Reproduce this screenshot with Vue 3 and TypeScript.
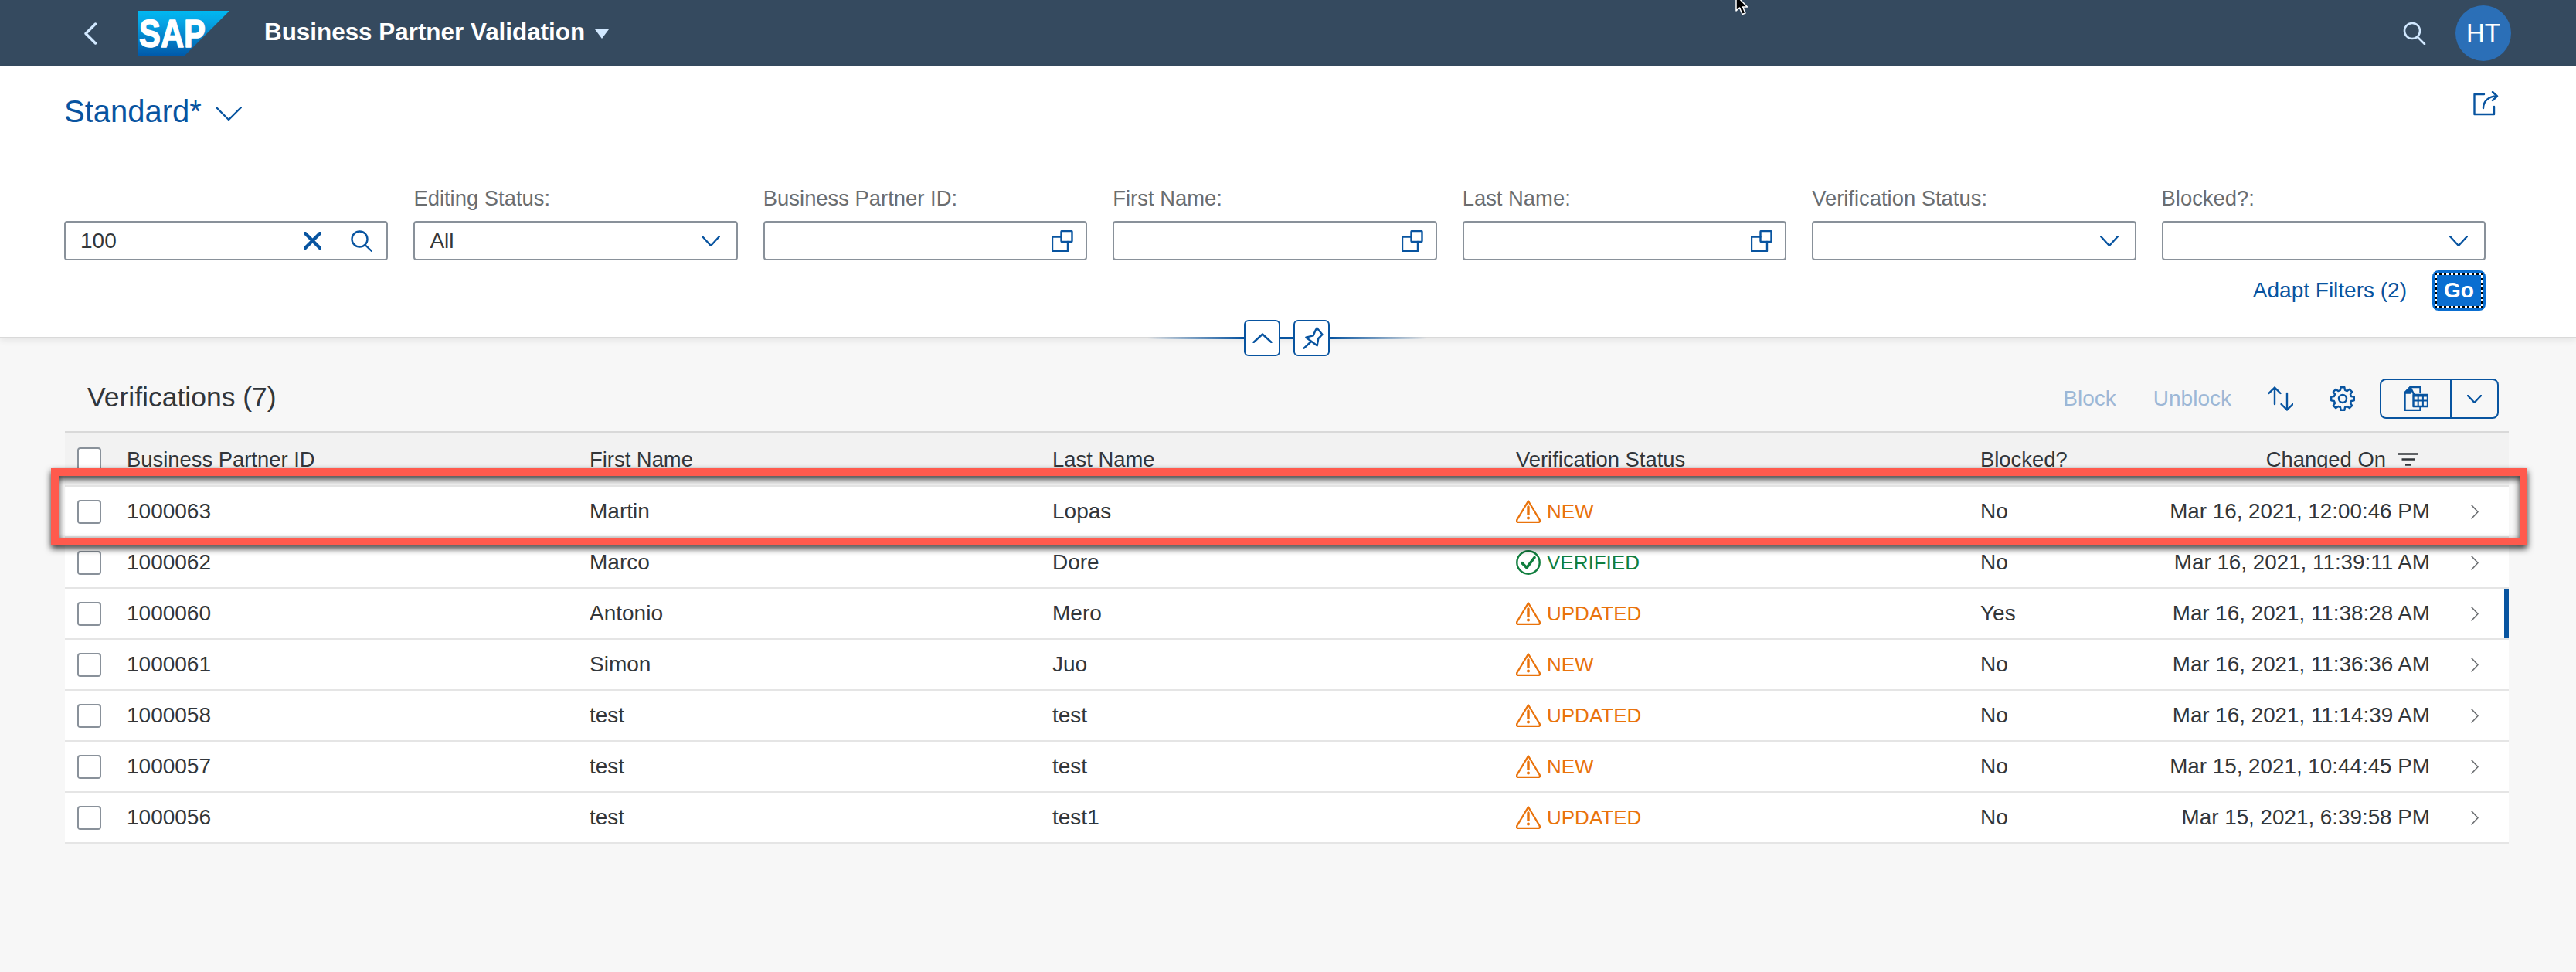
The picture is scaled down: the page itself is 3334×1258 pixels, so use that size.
<template>
  <div class="page">
    <header class="shell">
      <svg class="back" width="17" height="29" viewBox="0 0 17 29"><path d="M14.5 2 2 14.5 14.5 27" /></svg>
      <svg class="logo" width="119" height="59" viewBox="0 0 119 59">
        <defs>
          <linearGradient id="sapBlue" x1="0" y1="0" x2="0" y2="1">
            <stop offset="0" stop-color="#00b8f1" />
            <stop offset="0.25" stop-color="#06a5e5" />
            <stop offset="1" stop-color="#0058a9" />
          </linearGradient>
        </defs>
        <polygon points="0,0 119,0 60,59 0,59" fill="url(#sapBlue)" />
        <text x="2" y="47" textLength="86" lengthAdjust="spacingAndGlyphs" class="logo-text">SAP</text>
      </svg>
      <span class="app-title">Business Partner Validation</span>
      <span class="title-caret"></span>
      <svg class="shell-search" width="30" height="30" viewBox="0 0 30 30"><circle cx="12" cy="12" r="10" /><path d="M19 20 28 29" /></svg>
      <div class="avatar">HT</div>
    </header>

    <section class="filter-bar">
      <div class="variant-row">
        <div class="variant">
          <span>Standard*</span>
          <svg width="34" height="18" viewBox="0 0 34 18"><path d="M1 1 17 17 33 1" /></svg>
        </div>
        <svg class="share" width="33" height="32" viewBox="0 0 33 32"><path d="M14 4H1.500V30H27V20" /><path d="M13 22C13 13 20 6.500 30 6.500" /><path d="M25 1 31 6.500 25 12" /></svg>
      </div>

      <div class="filters">
        <div v-for="f in filters" :key="f.label" class="filter">
          <label>{{ f.label }}</label>
          <div class="input">
            <span class="value">{{ f.value }}</span>
            <template v-if="f.kind === 'search'">
              <svg class="clear" width="23" height="23" viewBox="0 0 23 23"><path d="M2 2 21 21M21 2 2 21" /></svg>
              <svg class="search" width="28" height="28" viewBox="0 0 28 28"><circle cx="11.500" cy="11.500" r="10" /><path d="M18.500 19 27 27" /></svg>
            </template>
            <svg v-else-if="f.kind === 'help'" class="help" width="28" height="28" viewBox="0 0 28 28"><rect x="12.500" y="1" width="14" height="14" rx="1" /><path d="M12.500 8.500H1V27H21V15" /></svg>
            <svg v-else class="caret" width="24" height="14" viewBox="0 0 24 14"><path d="M1 1 12 13 23 1" /></svg>
          </div>
        </div>
      </div>

      <div class="actions">
        <a class="adapt">Adapt Filters (2)</a>
        <button class="go">Go</button>
      </div>

      <div class="expander">
        <button class="mini"><svg width="26" height="13" viewBox="0 0 26 13"><path d="M1.500 12 13 1.500 24.500 12" /></svg></button>
        <button class="mini">
          <svg width="43" height="43" viewBox="0 0 43 43"><path d="M14.300 20.700 23.700 18.300 26.700 11.300 28.500 8.500 35.500 17 33 19.500 30.300 22 28.700 31.300Z" /><path d="M11.700 34.700 21 26" /></svg>
        </button>
      </div>
    </section>

    <main class="content">
      <div class="toolbar">
        <h2>Verifications (7)</h2>
        <div class="tools">
          <span class="off">Block</span>
          <span class="off">Unblock</span>
          <svg width="32" height="32" viewBox="0 0 32 32"><path d="M8 23V1.500M.500 9 8 1.500 15.500 9M24 9V30.500M16.500 23 24 30.500 31.500 23" /></svg>
          <svg class="gear" width="32" height="32" viewBox="0 0 32 32"><path :d="gear" /><circle cx="16" cy="16" r="5" /></svg>
          <div class="menu-btn">
            <div class="menu-main">
              <svg width="32" height="32" viewBox="0 0 32 32">
                <path d="M8.500 1H21.500V8M21.500 27V31H1.500V8L8.500 1Z" />
                <path d="M1.500 8.500 8.500 8.500V1Z" class="fold" />
                <rect x="12.500" y="11" width="18.500" height="15" class="sheet" />
                <path d="M12.500 12.500H31M18.700 11V26M24.900 11V26M12.500 18.500H31" class="sheet-lines" />
              </svg>
            </div>
            <div class="menu-arrow"><svg width="19" height="11" viewBox="0 0 19 11"><path d="M1 1 9.500 10 18 1" /></svg></div>
          </div>
        </div>
      </div>

      <div class="row head">
        <div class="cell check"><span class="box"></span></div>
        <div class="cell">Business Partner ID</div>
        <div class="cell">First Name</div>
        <div class="cell">Last Name</div>
        <div class="cell">Verification Status</div>
        <div class="cell">Blocked?</div>
        <div class="cell changed">
          <span>Changed On</span>
          <svg width="26" height="18" viewBox="0 0 26 18"><path d="M0 1.500H26M4.500 8.500H21.500M9 15.500H17" /></svg>
        </div>
        <div class="cell"></div>
      </div>

      <div v-for="r in rows" :key="r.id" class="row" :class="{ marked: r.marked }">
        <div class="cell check"><span class="box"></span></div>
        <div class="cell">{{ r.id }}</div>
        <div class="cell">{{ r.first }}</div>
        <div class="cell">{{ r.last }}</div>
        <div class="cell status" :class="r.status === 'VERIFIED' ? 'ok' : 'warn'">
          <svg v-if="r.status === 'VERIFIED'" width="32" height="32" viewBox="0 0 32 32">
            <circle cx="16" cy="16" r="14.700" />
            <path class="tick" d="M8 16.700 14 22.700 24 9.500" />
          </svg>
          <svg v-else width="32" height="30" viewBox="0 0 32 30">
            <path d="M16 1.500 30.500 25.500Q32 29 28.500 29H3.500Q0 29 1.500 25.500Z" />
            <path class="mark" d="M16 9V18.500" />
            <circle class="dot" cx="16" cy="23.500" r="2" />
          </svg>
          <span>{{ r.status }}</span>
        </div>
        <div class="cell">{{ r.blocked }}</div>
        <div class="cell date">{{ r.date }}</div>
        <div class="cell nav"><svg width="10" height="19" viewBox="0 0 10 19"><path d="M1 1 9 9.500 1 18" /></svg></div>
      </div>
    </main>

    <div class="callout"></div>
    <svg class="pointer" width="24" height="24" viewBox="0 0 24 24"><path d="M2 -6V14L6.500 10 10 18.500 14 17 10.500 9H16.500Z" /></svg>
  </div>
</template>

<script setup lang="ts">
interface Filter {
  label: string
  value: string
  kind: 'search' | 'select' | 'help'
}

interface Row {
  id: string
  first: string
  last: string
  status: string
  blocked: string
  date: string
  marked?: boolean
}

const filters: Filter[] = [
  { label: '', value: '100', kind: 'search' },
  { label: 'Editing Status:', value: 'All', kind: 'select' },
  { label: 'Business Partner ID:', value: '', kind: 'help' },
  { label: 'First Name:', value: '', kind: 'help' },
  { label: 'Last Name:', value: '', kind: 'help' },
  { label: 'Verification Status:', value: '', kind: 'select' },
  { label: 'Blocked?:', value: '', kind: 'select' },
]

const rows: Row[] = [
  { id: '1000063', first: 'Martin', last: 'Lopas', status: 'NEW', blocked: 'No', date: 'Mar 16, 2021, 12:00:46 PM' },
  { id: '1000062', first: 'Marco', last: 'Dore', status: 'VERIFIED', blocked: 'No', date: 'Mar 16, 2021, 11:39:11 AM' },
  { id: '1000060', first: 'Antonio', last: 'Mero', status: 'UPDATED', blocked: 'Yes', date: 'Mar 16, 2021, 11:38:28 AM', marked: true },
  { id: '1000061', first: 'Simon', last: 'Juo', status: 'NEW', blocked: 'No', date: 'Mar 16, 2021, 11:36:36 AM' },
  { id: '1000058', first: 'test', last: 'test', status: 'UPDATED', blocked: 'No', date: 'Mar 16, 2021, 11:14:39 AM' },
  { id: '1000057', first: 'test', last: 'test', status: 'NEW', blocked: 'No', date: 'Mar 15, 2021, 10:44:45 PM' },
  { id: '1000056', first: 'test', last: 'test1', status: 'UPDATED', blocked: 'No', date: 'Mar 15, 2021, 6:39:58 PM' },
]

// 8 tooth gear outline
function gearPath(): string {
  const pts: string[] = []
  for (let i = 0; i < 8; i++) {
    const a = i * 45
    for (const [r, d] of [[11.5, -15], [15, -9], [15, 9], [11.5, 15]]) {
      const rad = ((a + d) * Math.PI) / 180
      pts.push(`${(16 + r * Math.cos(rad)).toFixed(2)} ${(16 + r * Math.sin(rad)).toFixed(2)}`)
    }
  }
  return 'M' + pts.join('L') + 'Z'
}
const gear = gearPath()
</script>

<style>
html,
body {
  margin: 0;
  background: #f7f7f7;
}
</style>

<style scoped>
.page {
  position: relative;
  width: 3334px;
  height: 1258px;
  overflow: hidden;
  background: #f7f7f7;
  color: #32363a;
  font-family: "Liberation Sans", Arial, sans-serif;
  font-size: 28px;
}

svg {
  display: block;
  flex: none;
  fill: none;
  stroke: #0854a0;
  stroke-width: 2.4;
  stroke-linecap: round;
  stroke-linejoin: round;
}

.shell {
  display: flex;
  align-items: center;
  height: 86px;
  padding-left: 109px;
  background: #354a5f;
  color: #fff;
}

.shell svg {
  stroke: #d1e8ff;
}

.back {
  stroke-width: 3.4 !important;
}

.logo {
  margin-left: 52px;
  stroke: none !important;
}

.logo-text {
  fill: #fff;
  stroke: #fff;
  stroke-width: 1.5;
  font-family: "Liberation Sans", Arial, sans-serif;
  font-size: 50px;
  font-weight: 700;
}

.app-title {
  margin-left: 45px;
  margin-top: -3px;
  font-size: 31.4px;
  font-weight: 700;
}

.title-caret {
  margin-left: 13px;
  margin-top: 2px;
  border-top: 12px solid #d1e8ff;
  border-left: 9px solid transparent;
  border-right: 9px solid transparent;
}

.shell-search {
  margin-left: auto;
  stroke-width: 2.6 !important;
}

.avatar {
  display: flex;
  align-items: center;
  justify-content: center;
  width: 72px;
  height: 72px;
  margin: 0 84px 0 38px;
  border-radius: 50%;
  background: #2b6fb7;
  font-size: 33px;
}

.filter-bar {
  position: relative;
  box-sizing: border-box;
  height: 352px;
  padding: 0 117px 0 83px;
  background: #fff;
  border-bottom: 2px solid #d9d9d9;
  box-shadow: 0 3px 8px rgba(0, 0, 0, 0.07);
}

.variant-row {
  display: flex;
  justify-content: space-between;
  height: 157px;
}

.variant {
  display: flex;
  align-items: center;
  gap: 18px;
  height: 44px;
  margin-top: 36px;
  color: #0854a0;
  font-size: 40px;
}

.variant svg {
  margin-top: 6px;
}

.share {
  margin: 32px -17px 0 0;
}

.filters {
  display: grid;
  grid-template-columns: repeat(7, 1fr);
  gap: 33px;
}

.filter label {
  display: block;
  height: 28px;
  margin-bottom: 15px;
  color: #6a6d70;
  font-size: 27.4px;
  line-height: 28px;
}

.input {
  display: flex;
  align-items: center;
  box-sizing: border-box;
  height: 51px;
  padding: 0 16px 0 19px;
  background: #fff;
  border: 2px solid #89919a;
  border-radius: 4px;
}

.value {
  flex: 1;
  padding-top: 1px;
}

.clear {
  stroke-width: 4.4;
  margin-right: 38px;
}

.search {
  margin-right: 2px;
}

.caret {
  margin-right: 5px;
}

.actions {
  display: flex;
  align-items: center;
  justify-content: flex-end;
  gap: 33px;
  margin-top: 13px;
}

.adapt {
  color: #0854a0;
}

.go {
  position: relative;
  isolation: isolate;
  width: 69px;
  height: 52px;
  padding: 0;
  background: #0a6ed1;
  border: 0;
  border-radius: 8px;
  color: #fff;
  font: 700 28px "Liberation Sans", Arial, sans-serif;
}

.go::before {
  content: "";
  position: absolute;
  inset: 3px;
  z-index: -1;
  border: 3px dotted #000;
  background: linear-gradient(#0a6ed1, #0a6ed1) padding-box, #fff border-box;
}

.expander {
  position: absolute;
  left: 1485px;
  top: 328px;
  display: flex;
  align-items: center;
  justify-content: center;
  gap: 17px;
  width: 361px;
  height: 47px;
  background: linear-gradient(90deg, transparent, #0854a0 34%, #0854a0 66%, transparent) center / 100% 3px no-repeat;
}

.mini {
  display: flex;
  align-items: center;
  justify-content: center;
  box-sizing: border-box;
  width: 47px;
  height: 47px;
  padding: 0;
  background: #fff;
  border: 2px solid #0854a0;
  border-radius: 6px;
}

.content {
  padding: 0 87px 0 84px;
}

.toolbar {
  display: flex;
  align-items: center;
  justify-content: space-between;
  box-sizing: border-box;
  height: 120px;
  padding: 52px 13px 16px 29px;
}

h2 {
  margin: -3px 0 0;
  font-size: 35.5px;
  font-weight: 400;
}

.tools {
  display: flex;
  align-items: center;
  gap: 48px;
}

.off {
  color: #9db7d6;
}

.menu-btn {
  display: flex;
  box-sizing: border-box;
  width: 154px;
  height: 52px;
  margin-left: -16px;
  border: 2px solid #0854a0;
  border-radius: 8px;
}

.menu-main,
.menu-arrow {
  display: flex;
  align-items: center;
  justify-content: center;
}

.menu-main {
  width: 89px;
  border-right: 2px solid #0854a0;
}

.menu-arrow {
  flex: 1;
}

.fold {
  fill: #0854a0;
}

.sheet {
  fill: #f7f7f7;
}

.sheet-lines {
  stroke-width: 2;
  stroke-linecap: butt;
}

.row {
  display: grid;
  grid-template-columns: 80px 599px 599px 600px 601px 200px 382px 102px;
  align-items: center;
  box-sizing: border-box;
  height: 66px;
  background: #fff;
  border-bottom: 2px solid #e5e5e5;
}

.row.head {
  height: 72px;
  background: #f2f2f2;
  border-top: 3px solid #d9d9d9;
  font-size: 27.4px;
}

.row.marked {
  box-shadow: inset -6px 0 0 #0854a0;
}

.check {
  padding-left: 16px;
}

.box {
  display: block;
  box-sizing: border-box;
  width: 31px;
  height: 31px;
  background: #fff;
  border: 2px solid #89919a;
  border-radius: 4px;
}

.changed {
  display: flex;
  align-items: center;
  justify-content: flex-end;
  gap: 16px;
  padding-right: 15px;
}

.changed svg {
  stroke: #32363a;
  stroke-linecap: butt;
}

.date {
  font-size: 27.8px;
  text-align: right;
}

.nav {
  padding-left: 53px;
}

.nav svg {
  stroke: #6a6d70;
  stroke-width: 1.6;
}

.status {
  display: flex;
  align-items: center;
  gap: 8px;
  font-size: 26px;
}

.status.warn {
  color: #e9730c;
}

.status.warn svg {
  stroke: #e9730c;
}

.status.warn .mark {
  stroke-width: 3.4;
}

.status.warn .dot {
  fill: #e9730c;
  stroke: none;
}

.status.ok {
  color: #107e3e;
}

.status.ok svg {
  stroke: #107e3e;
}

.status.ok .tick {
  stroke-width: 3.6;
}

.callout {
  position: absolute;
  left: 66px;
  top: 606px;
  box-sizing: border-box;
  width: 3205px;
  height: 100px;
  border: 10px solid #ff5a4d;
  filter: drop-shadow(0 4px 4px rgba(0, 0, 0, 0.8));
}

.pointer {
  position: absolute;
  left: 2245px;
  top: 0;
  fill: #000;
  stroke: #fff;
  stroke-width: 1.5;
}
</style>
